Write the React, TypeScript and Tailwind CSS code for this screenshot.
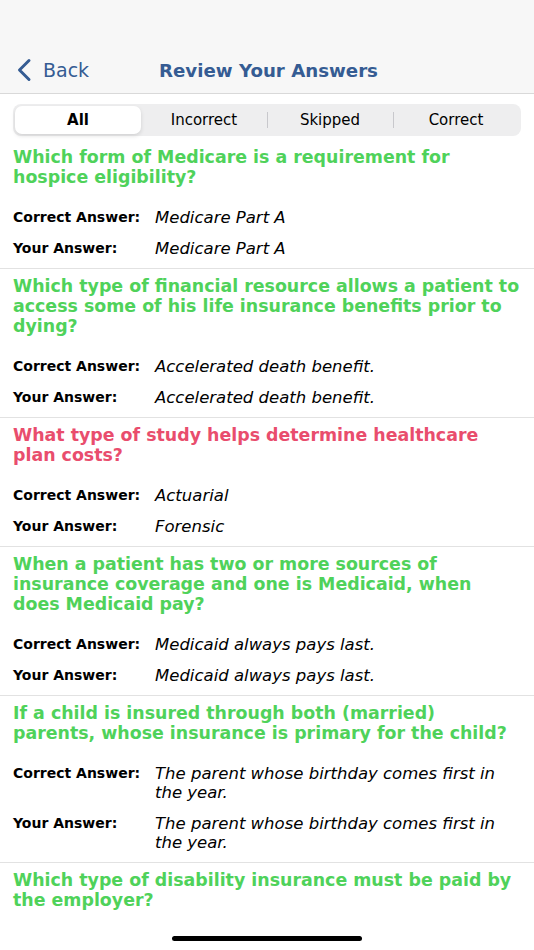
import { useState } from "react";

type Item = {
    question: string;
    correct: string;
    yours: string;
    ok: boolean;
};

const items: Item[] = [
    {
        question: "Which form of Medicare is a requirement for hospice eligibility?",
        correct: "Medicare Part A",
        yours: "Medicare Part A",
        ok: true,
    },
    {
        question: "Which type of financial resource allows a patient to access some of his life insurance benefits prior to dying?",
        correct: "Accelerated death benefit.",
        yours: "Accelerated death benefit.",
        ok: true,
    },
    {
        question: "What type of study helps determine healthcare plan costs?",
        correct: "Actuarial",
        yours: "Forensic",
        ok: false,
    },
    {
        question: "When a patient has two or more sources of insurance coverage and one is Medicaid, when does Medicaid pay?",
        correct: "Medicaid always pays last.",
        yours: "Medicaid always pays last.",
        ok: true,
    },
    {
        question: "If a child is insured through both (married) parents, whose insurance is primary for the child?",
        correct: "The parent whose birthday comes first in the year.",
        yours: "The parent whose birthday comes first in the year.",
        ok: true,
    },
    {
        question: "Which type of disability insurance must be paid by the employer?",
        correct: "",
        yours: "",
        ok: true,
    },
];

const tabs = ["All", "Incorrect", "Skipped", "Correct"];

function AnswerRow({ label, value }: { label: string; value: string }) {
    return (
        <div className="flex items-start">
            <span className="w-[142px] shrink-0 text-[14px] font-bold leading-[20px] text-black pt-[1px]">{label}</span>
            <span className="flex-1 pr-6 text-[16.5px] italic leading-[19px] text-black pt-[2px]">{value}</span>
        </div>
    );
}

export default function App() {
    const [active, setActive] = useState(0);

    return (
        <div className="w-[534px] h-[950px] overflow-hidden bg-white relative font-['DejaVu_Sans',Verdana,sans-serif]">
            {/* Nav bar */}
            <div className="h-[94px] bg-[#f7f7f7] border-b border-[#d9d9d9] flex items-end pb-[9px]">
                <div className="flex items-center pl-[16px] w-[159px]">
                    <svg width="16" height="24" viewBox="0 0 16 24" fill="none">
                        <path d="M13 2.5 L3.5 12 L13 21.5" stroke="#355c93" strokeWidth="3" strokeLinecap="round" strokeLinejoin="round" />
                    </svg>
                    <span className="ml-[11px] text-[19px] text-[#355c93]">Back</span>
                </div>
                <span className="text-[18.2px] font-bold text-[#355c93]">Review Your Answers</span>
            </div>

            {/* Segmented control */}
            <div className="px-[13px] pt-[10px]">
                <div className="h-[32px] rounded-[8px] bg-[#eeeeef] p-[2px] flex items-center">
                    {tabs.map((t, i) => (
                        <div key={t} className="flex-1 h-full flex items-center relative">
                            {i > 0 && active !== i && active !== i - 1 && (
                                <div className="absolute left-0 h-[16px] w-px bg-[#c8c8cc]" />
                            )}
                            <button
                                onClick={() => setActive(i)}
                                className={
                                    active === i
                                        ? "w-full h-full rounded-[7px] bg-white shadow-[0_2px_4px_rgba(0,0,0,0.12)] text-[15px] font-bold text-black"
                                        : "w-full h-full text-[15px] text-black"
                                }
                            >
                                {t}
                            </button>
                        </div>
                    ))}
                </div>
            </div>

            {/* List */}
            <div className="mt-[4px]">
                {items.map((it, idx) => (
                    <div key={idx} className="border-b border-[#e2e2e2] last:border-b-0 pl-[13px] pr-[13px] pt-[7px] pb-[10px]">
                        <p
                            className={
                                it.ok
                                    ? "text-[17.4px] font-bold leading-[20px] text-[#4fd25a]"
                                    : "text-[17.4px] font-bold leading-[20px] text-[#e94d6d]"
                            }
                        >
                            {it.question}
                        </p>
                        {it.correct && (
                            <div className="mt-[19px] flex flex-col gap-[10px]">
                                <AnswerRow label="Correct Answer:" value={it.correct} />
                                <AnswerRow label="Your Answer:" value={it.yours} />
                            </div>
                        )}
                    </div>
                ))}
            </div>

            {/* Home indicator */}
            <div className="absolute bottom-[9px] left-[172px] w-[190px] h-[5px] rounded-full bg-black" />
        </div>
    );
}
